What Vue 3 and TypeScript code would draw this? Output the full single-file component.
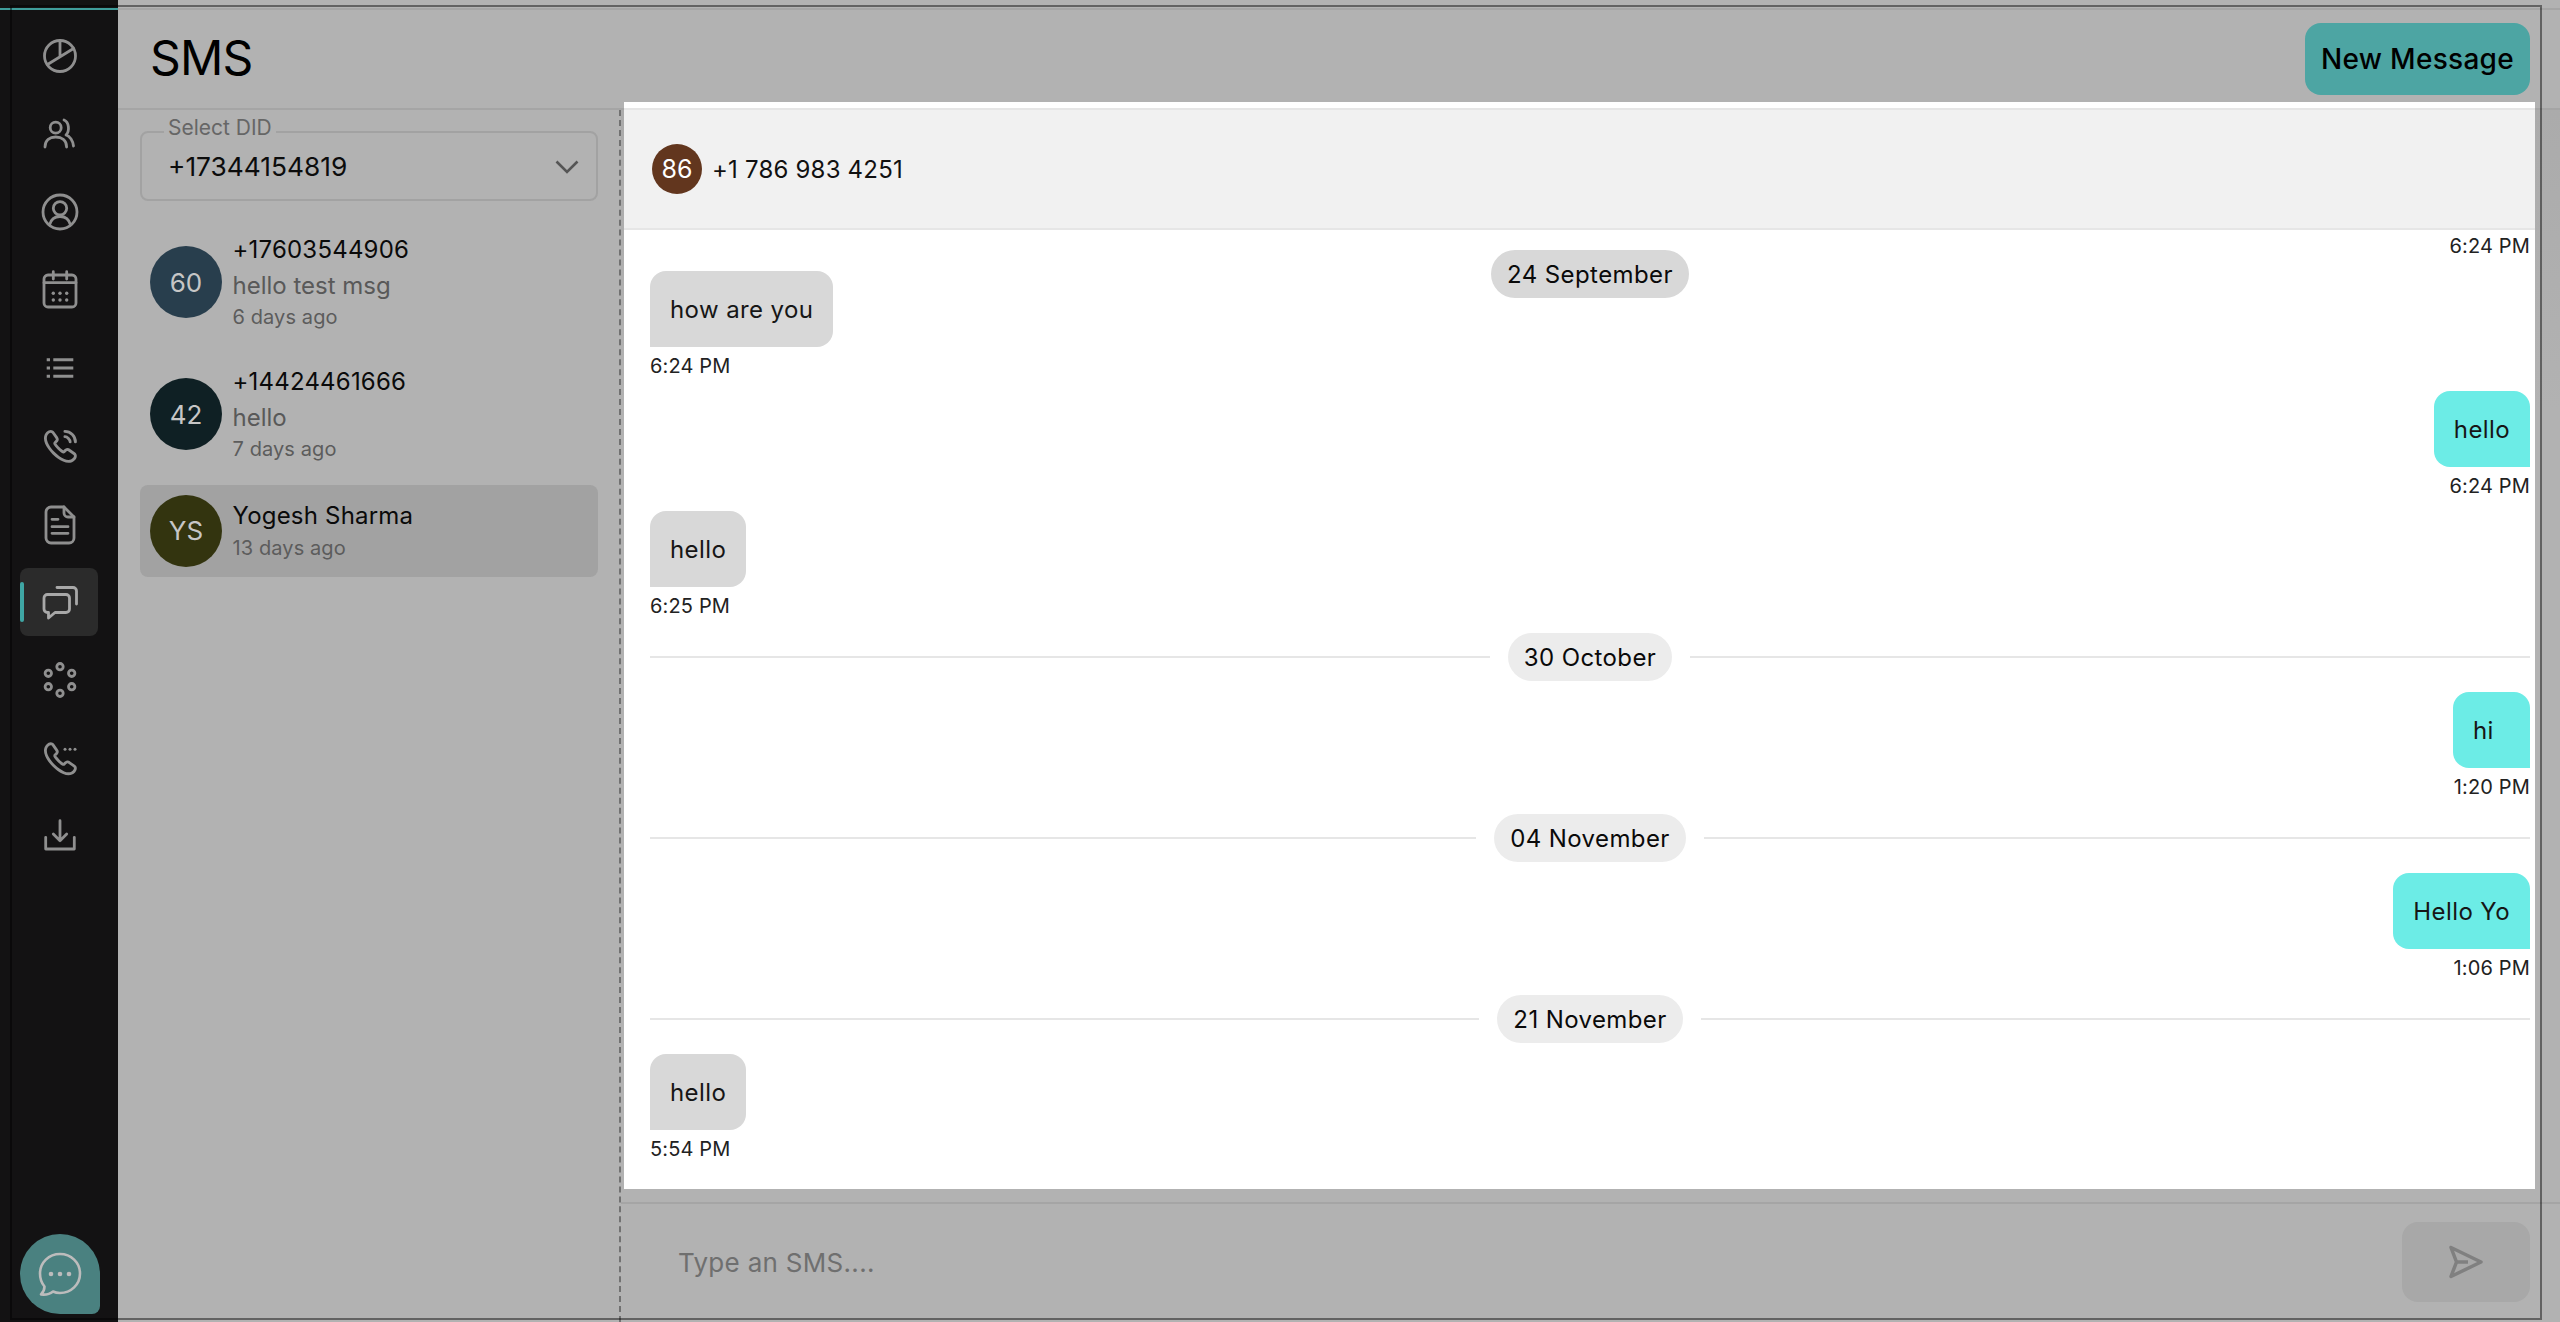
<script setup lang="ts">
interface Convo { initials: string; color: string; name: string; sub?: string; time: string; active?: boolean }
type Item = { kind: 'msg'; side: 'in' | 'out'; text: string; time: string } | { kind: 'date'; label: string }

const convos: Convo[] = [
  { initials: '60', color: '#283e4d', name: '+17603544906', sub: 'hello test msg', time: '6 days ago' },
  { initials: '42', color: '#0f2024', name: '+14424461666', sub: 'hello', time: '7 days ago' },
  { initials: 'YS', color: '#33340f', name: 'Yogesh Sharma', time: '13 days ago', active: true },
]
const items: Item[] = [
  { kind: 'msg', side: 'in', text: 'how are you', time: '6:24 PM' },
  { kind: 'msg', side: 'out', text: 'hello', time: '6:24 PM' },
  { kind: 'msg', side: 'in', text: 'hello', time: '6:25 PM' },
  { kind: 'date', label: '30 October' },
  { kind: 'msg', side: 'out', text: 'hi', time: '1:20 PM' },
  { kind: 'date', label: '04 November' },
  { kind: 'msg', side: 'out', text: 'Hello Yo', time: '1:06 PM' },
  { kind: 'date', label: '21 November' },
  { kind: 'msg', side: 'in', text: 'hello', time: '5:54 PM' },
]
const phone = 'M21.97 18.33c0 .36-.08.73-.25 1.09-.17.36-.39.7-.68 1.02-.49.54-1.03.93-1.64 1.18-.6.25-1.25.38-1.95.38-1.02 0-2.11-.24-3.26-.73s-2.3-1.15-3.44-1.98a28.75 28.75 0 0 1-3.28-2.8 28.414 28.414 0 0 1-2.79-3.27c-.82-1.14-1.48-2.28-1.96-3.41C2.24 8.67 2 7.58 2 6.54c0-.68.12-1.33.36-1.93.24-.61.62-1.17 1.15-1.67C4.15 2.31 4.85 2 5.59 2c.28 0 .56.06.81.18.26.12.49.3.67.56l2.32 3.27c.18.25.31.48.4.7.09.21.14.42.14.61 0 .24-.07.48-.21.71-.13.23-.32.47-.56.71l-.76.79c-.11.11-.16.24-.16.4 0 .08.01.15.03.23.03.08.06.14.08.2.18.33.49.76.93 1.28.45.52.93 1.05 1.45 1.58.54.53 1.06 1.02 1.59 1.47.52.44.95.74 1.29.92.05.02.11.05.18.08.08.03.16.04.25.04.17 0 .3-.06.41-.17l.76-.75c.25-.25.49-.44.72-.56.23-.14.46-.21.71-.21.19 0 .39.04.61.13.22.09.45.22.7.39l3.31 2.35c.26.18.44.39.55.64.1.25.16.5.16.78z'
</script>

<template>
  <div class="app">
    <aside class="sidebar">
      <nav class="nav">
        <div class="nav-item">
          <svg viewBox="0 0 40 40" class="ico"><circle cx="20" cy="20" r="15.5" /><path d="M20 4.5V20M33.5 12.5L7.5 28.5" /></svg>
        </div>
        <div class="nav-item">
          <svg viewBox="0 0 40 40" class="ico"><circle cx="15.7" cy="13.7" r="5.5" /><path d="M5 33C5 26 10 23 15.7 23C21.5 23 26.6 26 26.6 33M24 6C29 8 30 17 26 21C30 22 33 27 33.5 32" /></svg>
        </div>
        <div class="nav-item">
          <svg viewBox="0 0 40 40" class="ico"><circle cx="20" cy="20" r="17" /><circle cx="20" cy="16.3" r="6.7" /><path d="M9.5 33C11 27 15 24.5 20 24.5C25 24.5 29 27 30.5 33" /></svg>
        </div>
        <div class="nav-item">
          <svg viewBox="0 0 40 40" class="ico"><rect x="4" y="5" width="32" height="32" rx="4" /><path d="M13.3 1.7V9M26.7 1.7V9M4 12.7H36" /><g class="fill"><circle cx="13.3" cy="23.3" r="1.7" /><circle cx="20" cy="23.3" r="1.7" /><circle cx="26.7" cy="23.3" r="1.7" /><circle cx="13.3" cy="30" r="1.7" /><circle cx="20" cy="30" r="1.7" /><circle cx="26.7" cy="30" r="1.7" /></g></svg>
        </div>
        <div class="nav-item">
          <svg viewBox="0 0 40 40" class="ico"><path class="butt" d="M6.7 11.7H10M13.3 11.7H33.3M6.7 20H10M13.3 20H33.3M6.7 28.3H10M13.3 28.3H33.3" /></svg>
        </div>
        <div class="nav-item">
          <svg viewBox="0 0 40 40" class="ico"><g transform="translate(2.4 2.4) scale(1.5)"><path class="thin" :d="phone" /><path class="thin" d="M18.5 9c0-.6-.47-1.52-1.17-2.27-.64-.69-1.49-1.23-2.33-1.23M22 9c0-3.87-3.13-7-7-7" /></g></svg>
        </div>
        <div class="nav-item">
          <svg viewBox="0 0 40 40" class="ico"><path d="M11 3H24L34 13V34a5 5 0 0 1-5 5H11a5 5 0 0 1-5-5V8a5 5 0 0 1 5-5z" /><path d="M24 3V9a4 4 0 0 0 4 4H34M12 15.3H18M12 22.7H28M12 29.3H28" /></svg>
        </div>
        <div class="nav-item active">
          <span class="nav-bar"></span>
          <svg viewBox="0 0 40 40" class="ico bright"><path d="M7.5 12.5H26a3.5 3.5 0 0 1 3.5 3.5V27a3.5 3.5 0 0 1-3.5 3.5H15L8.5 36V30.5H7.5a3.5 3.5 0 0 1-3.5-3.5V16a3.5 3.5 0 0 1 3.5-3.5z" /><path d="M17 5.5H33a3.5 3.5 0 0 1 3.5 3.5V22" /></svg>
        </div>
        <div class="nav-item">
          <svg viewBox="0 0 40 40" class="ico"><circle cx="20" cy="6.7" r="3.2" /><circle cx="31.7" cy="13.3" r="3.2" /><circle cx="31.7" cy="26.7" r="3.2" /><circle cx="20" cy="33.3" r="3.2" /><circle cx="8.3" cy="26.7" r="3.2" /><circle cx="8.3" cy="13.3" r="3.2" /></svg>
        </div>
        <div class="nav-item">
          <svg viewBox="0 0 40 40" class="ico"><g transform="translate(2.4 2.8) scale(1.5)"><path class="thin" :d="phone" /></g><g class="fill"><circle cx="25" cy="11.3" r="1.5" /><circle cx="30" cy="11.3" r="1.5" /><circle cx="35" cy="11.3" r="1.5" /></g></svg>
        </div>
        <div class="nav-item">
          <svg viewBox="0 0 40 40" class="ico"><path d="M20 4.7V24.7M13.3 18L20 24.7L26.7 18M5.7 21.3V33H34.3V21.3" /></svg>
        </div>
      </nav>
      <div class="fab">
        <svg viewBox="0 0 44 44" class="fab-ico"><path d="M22 2C33 2 42 10.5 42 21.5C42 32.5 33 41 22 41C19.5 41 17 40.5 15 39.5C12 42 7.5 43 3 42.5C5.5 40 6.5 37.5 6.5 34.5C3.5 31 2 26.5 2 21.5C2 10.5 11 2 22 2z" /><circle cx="13" cy="22" r="2.3" /><circle cx="22" cy="22" r="2.3" /><circle cx="31" cy="22" r="2.3" /></svg>
      </div>
    </aside>

    <main class="main">
      <header class="topbar">
        <h1 class="title">SMS</h1>
        <button class="new-btn">New Message</button>
      </header>

      <div class="body">
        <section class="left">
          <div class="select">
            <span class="legend">Select DID</span>
            <span class="select-value">+17344154819</span>
            <svg viewBox="0 0 24 14" class="chev"><path d="M1.5 1.5L12 12L22.5 1.5" /></svg>
          </div>
          <div class="convos">
            <div v-for="c in convos" :key="c.name" class="convo" :class="{ selected: c.active }">
              <div class="avatar" :style="{ background: c.color }">{{ c.initials }}</div>
              <div class="convo-text">
                <div class="convo-name">{{ c.name }}</div>
                <div v-if="c.sub" class="convo-sub">{{ c.sub }}</div>
                <div class="convo-time">{{ c.time }}</div>
              </div>
            </div>
          </div>
        </section>

        <section class="right">
          <div class="panel">
            <div class="chat-head">
              <div class="chat-avatar">86</div>
              <span class="chat-name">+1 786 983 4251</span>
            </div>
            <div class="messages">
              <div class="sticky-date">24 September</div>
              <div class="time time-out first">6:24 PM</div>
              <template v-for="(item, i) in items" :key="i">
                <div v-if="item.kind === 'date'" class="divider">
                  <span class="line"></span>
                  <span class="pill">{{ item.label }}</span>
                  <span class="line"></span>
                </div>
                <div v-else class="msg" :class="item.side">
                  <div class="bubble">{{ item.text }}</div>
                  <div class="time">{{ item.time }}</div>
                </div>
              </template>
            </div>
          </div>
          <footer class="composer">
            <span class="placeholder">Type an SMS....</span>
            <button class="send">
              <svg viewBox="0 0 36 34" class="send-ico"><path d="M3 2.5L33 17L3 31.5L8.5 17z" /><path d="M8.5 17H20" /></svg>
            </button>
          </footer>
        </section>
      </div>
    </main>

    <div class="teal-line"></div>
    <div class="frame"></div>
  </div>
</template>

<style>
html, body { margin: 0; padding: 0; background: #b2b2b2; }
</style>

<style scoped>
.app {
  position: relative;
  display: flex;
  width: 2560px;
  height: 1322px;
  overflow: hidden;
  background: #b2b2b2;
  font-family: Inter, "Liberation Sans", sans-serif;
  color: #000;
}
.sidebar {
  width: 118px;
  flex: none;
  height: 100%;
  box-sizing: border-box;
  background: #131213;
  padding: 22px 0 8px 20px;
  display: flex;
  flex-direction: column;
  justify-content: space-between;
}
.nav { display: flex; flex-direction: column; gap: 10px; }
.nav-item {
  position: relative;
  width: 78px;
  height: 68px;
  border-radius: 8px;
  display: flex;
  align-items: center;
  justify-content: center;
  padding-left: 2px;
  box-sizing: border-box;
}
.nav-item.active { background: #2b2b2b; }
.nav-bar {
  position: absolute;
  left: 0;
  top: 14px;
  width: 4px;
  height: 40px;
  border-radius: 2px;
  background: #3fa6a4;
}
.ico { width: 40px; height: 40px; overflow: visible; }
.ico circle, .ico path, .ico rect {
  fill: none;
  stroke: #8f8f8f;
  stroke-width: 2.8;
  stroke-linecap: round;
  stroke-linejoin: round;
}
.ico path.butt { stroke-width: 3; stroke-linecap: butt; }
.ico path.thin { stroke-width: 1.9; }
.ico .fill circle { fill: #8f8f8f; stroke: none; }
.ico.bright path { stroke: #a8a8a8; }
.fab {
  width: 80px;
  height: 80px;
  background: #4a8180;
  border-radius: 50% 50% 8px 50%;
  display: flex;
  align-items: center;
  justify-content: center;
}
.fab-ico { width: 44px; height: 44px; }
.fab-ico path { fill: none; stroke: #bcbcbc; stroke-width: 2.6; stroke-linejoin: round; }
.fab-ico circle { fill: #bcbcbc; }

.main { flex: 1; min-width: 0; display: flex; flex-direction: column; }
.topbar {
  height: 102px;
  margin-top: 8px;
  flex: none;
  box-sizing: border-box;
  border-top: 2px solid #a5a5a5;
  border-bottom: 2px solid #a5a5a5;
  display: flex;
  align-items: center;
  justify-content: space-between;
  padding: 0 30px 0 32px;
}
.title { margin: -3px 0 0; font-size: 48px; font-weight: 400; line-height: 1; letter-spacing: -0.8px; }
.new-btn {
  width: 225px;
  height: 72px;
  border: none;
  border-radius: 16px;
  background: #4da5a3;
  color: #000;
  font: 500 28px Inter, sans-serif;
  letter-spacing: 0.3px;
  padding: 0;
}

.body { flex: 1; min-height: 0; display: flex; }
.left {
  width: 503px;
  flex: none;
  box-sizing: border-box;
  border-right: 2px dashed #717171;
  padding: 21px 0 0 22px;
}
.select {
  position: relative;
  width: 458px;
  height: 70px;
  box-sizing: border-box;
  border: 2px solid #a2a2a2;
  border-radius: 8px;
  display: flex;
  align-items: center;
  justify-content: space-between;
  padding: 1px 17px 0 26px;
}
.legend {
  position: absolute;
  left: 22px;
  top: -17px;
  padding: 0 4px;
  background: #b2b2b2;
  font-size: 21px;
  line-height: 24px;
  color: #666;
}
.select-value { font-size: 26.3px; color: #0c0c0c; }
.chev { width: 24px; height: 14px; }
.chev path { fill: none; stroke: #555; stroke-width: 2.6; }
.convos { margin-top: 19.5px; display: flex; flex-direction: column; gap: 9px; width: 458px; }
.convo {
  display: flex;
  align-items: center;
  gap: 10.5px;
  padding: 10px;
  min-height: 92px;
  box-sizing: border-box;
  border-radius: 8px;
}
.convo.selected { background: #a2a2a2; }
.avatar {
  width: 72px;
  height: 72px;
  flex: none;
  border-radius: 50%;
  display: flex;
  align-items: center;
  justify-content: center;
  font-size: 26px;
  color: #c6c6c6;
}
.convo-text { padding-top: 2px; }
.convo-name { font-size: 24px; line-height: 33px; letter-spacing: 0.2px; color: #0a0a0a; }
.convo-sub { font-size: 24px; line-height: 31px; padding-top: 4px; color: #595959; }
.convo-time { font-size: 20px; line-height: 33px; color: #5c5c5c; letter-spacing: 0.1px; }

.right {
  flex: 1;
  min-width: 0;
  display: flex;
  flex-direction: column;
  background: linear-gradient(#ababab, #b2b2b2 300px);
}
.panel {
  position: relative;
  margin: -8px 25px 13px 3px;
  flex: 1;
  min-height: 0;
  padding-top: 6px;
  background: #fff;
  overflow: hidden;
  display: flex;
  flex-direction: column;
}
.chat-head {
  height: 122px;
  flex: none;
  box-sizing: border-box;
  background: #f1f1f1;
  border-top: 2px solid #e6e6e6;
  border-bottom: 2px solid #e6e6e6;
  display: flex;
  align-items: center;
  gap: 10px;
  padding-left: 28px;
}
.chat-avatar {
  width: 50px;
  height: 50px;
  border-radius: 50%;
  background: #62361e;
  color: #fff;
  font-size: 25px;
  display: flex;
  align-items: center;
  justify-content: center;
}
.chat-name { font-size: 24px; color: #111; letter-spacing: 0.2px; }
.messages {
  position: relative;
  flex: 1;
  padding: 4px 5px 0 26px;
}
.sticky-date {
  position: absolute;
  left: 867px;
  top: 20px;
  width: 198px;
  height: 48px;
  border-radius: 24px;
  background: #d8d8d8;
  display: flex;
  align-items: center;
  justify-content: center;
  font-size: 24px;
  letter-spacing: 0.4px;
  color: #0a0a0a;
}
.msg { display: flex; flex-direction: column; margin-bottom: 13px; }
.msg.in { align-items: flex-start; }
.msg.out { align-items: flex-end; }
.bubble {
  height: 76px;
  min-width: 77px;
  box-sizing: border-box;
  padding: 0 20px;
  border-radius: 16px;
  display: flex;
  align-items: center;
  font-size: 24px;
  letter-spacing: 0.4px;
  color: #161616;
}
.in .bubble { background: #d8d8d8; border-bottom-left-radius: 0; }
.out .bubble { background: #6cece6; border-bottom-right-radius: 0; }
.time {
  margin-top: 7px;
  font-size: 20px;
  line-height: 24px;
  letter-spacing: 0.15px;
  color: #222;
}
.time-out.first { margin: 0 0 13px; text-align: right; }
.divider {
  display: flex;
  align-items: center;
  gap: 18px;
  margin: 15px 0 11px;
  height: 48px;
}
.divider .line { flex: 1; height: 2px; background: #e6e6e6; }
.pill {
  height: 48px;
  padding: 0 16px;
  border-radius: 24px;
  background: #ececec;
  display: flex;
  align-items: center;
  font-size: 24px;
  letter-spacing: 0.4px;
  color: #0a0a0a;
}
.composer {
  height: 120px;
  flex: none;
  box-sizing: border-box;
  border-top: 2px solid #a5a5a5;
  background: #b2b2b2;
  display: flex;
  align-items: center;
  justify-content: space-between;
  padding: 0 30px 2px 57px;
}
.placeholder { font-size: 26px; letter-spacing: 0.3px; color: #6f6f6f; }
.send {
  width: 128px;
  height: 80px;
  border: none;
  border-radius: 16px;
  background: #a8a8a8;
  display: flex;
  align-items: center;
  justify-content: center;
  padding: 0;
}
.send-ico { width: 36px; height: 34px; }
.send-ico path { fill: none; stroke: #808080; stroke-width: 3.5; stroke-linejoin: round; }

.teal-line {
  position: absolute;
  left: 0;
  top: 8px;
  width: 118px;
  height: 2px;
  background: #3f9d9b;
}
.frame {
  position: absolute;
  left: 10px;
  top: 5px;
  width: 2532px;
  height: 1315px;
  box-sizing: border-box;
  border: 2px solid rgba(0, 0, 0, 0.45);
  pointer-events: none;
}
</style>
